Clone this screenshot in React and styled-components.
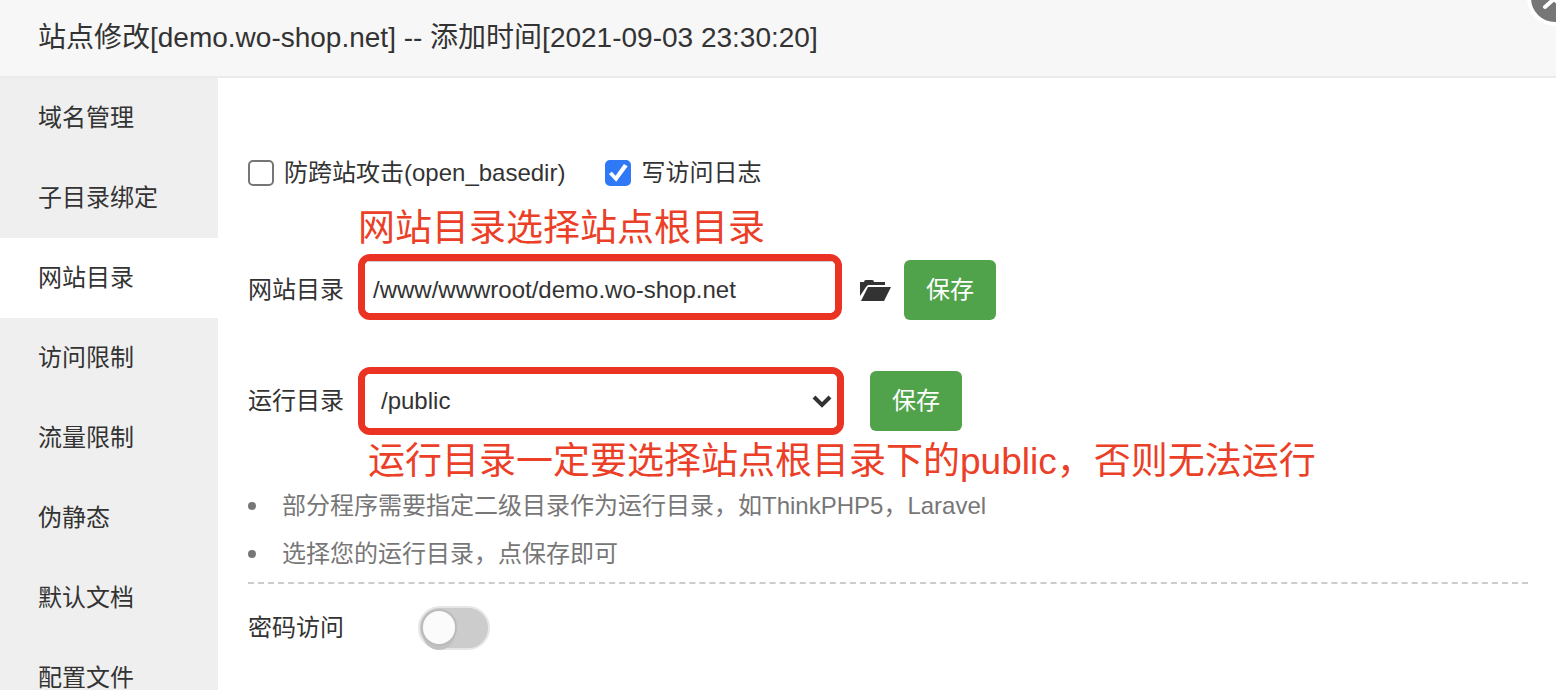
import React, { useState } from 'react'
import styled, { createGlobalStyle } from 'styled-components'

const GlobalStyle = createGlobalStyle`
  * {
    box-sizing: border-box;
  }

  body {
    margin: 0;
    background: #fff;
    color: #333;
    font-family: 'Liberation Sans', 'Noto Sans CJK SC', sans-serif;
    font-size: 24px;
    line-height: 40px;
    overflow: hidden;
  }

  button,
  input,
  select {
    font-family: inherit;
    font-size: inherit;
    line-height: inherit;
    color: inherit;
  }
`

const Dialog = styled.div`
  position: relative;
  display: flex;
  flex-direction: column;
  height: 100vh;
  overflow: hidden;
`

const Header = styled.header`
  flex: none;
  padding: 0 38px;
  background: #f7f7f7;
  border-bottom: 2px solid #ebebeb;
`

const Title = styled.h1`
  margin: 0;
  font-size: 28px;
  font-weight: normal;
  line-height: 76px;
`

const CloseButton = styled.button`
  position: absolute;
  top: -32px;
  right: -29px;
  width: 60px;
  height: 60px;
  padding: 0;
  border: 0;
  background: none;

  svg {
    display: block;
  }
`

const Body = styled.div`
  flex: 1;
  display: flex;
  min-height: 0;
`

const Sidebar = styled.nav`
  flex: none;
  width: 218px;
  overflow: hidden;
  background: #efefef;
`

const MenuItem = styled.a`
  display: block;
  padding-left: 38px;
  line-height: 80px;
  color: inherit;
  text-decoration: none;
  background: ${({ $active }) => ($active ? '#fff' : 'transparent')};
`

const Content = styled.main`
  flex: 1;
  min-width: 0;
  padding: 75px 28px 0 30px;
`

const CheckRow = styled.div`
  display: flex;
  align-items: center;
  gap: 40px;
`

const CheckLabel = styled.label`
  display: flex;
  align-items: center;
  gap: 10px;
`

const Checkbox = styled.input`
  appearance: none;
  display: flex;
  width: 26px;
  height: 26px;
  margin: 0;
  border: 2px solid #767676;
  border-radius: 5px;
  background: #fff;

  &:checked {
    border-color: #2f78f6;
    background: #2f78f6;
  }

  &:checked::before {
    content: '';
    width: 22px;
    height: 22px;
    background: #fff;
    clip-path: polygon(7% 54%, 20% 44%, 37% 62%, 75% 9%, 92% 19%, 40% 90%);
  }
`

const Note = styled.p`
  margin: ${({ $margin }) => $margin};
  color: #eb3f28;
  font-size: 37px;
  line-height: 54px;
  white-space: nowrap;
`

const FieldRow = styled.div`
  display: flex;
  align-items: ${({ $align }) => $align || 'center'};
`

const FieldLabel = styled.label`
  flex: none;
  width: 110px;
  line-height: 60px;
`

const Highlight = styled.div`
  position: relative;
  width: ${({ $width }) => $width};
  height: ${({ $height }) => $height};
  border: 7px solid #ea3323;
  border-radius: 12px;
  overflow: hidden;
`

const PathInput = styled.input`
  display: block;
  width: 100%;
  height: 100%;
  padding: 4px 8px 0;
  border: 0;
  border-top: 1px solid #ccc;
  outline: none;
`

const DirSelect = styled.select`
  display: block;
  width: 100%;
  height: 100%;
  padding: 0 16px;
  border: 0;
  outline: none;
  appearance: none;
  background: #fff;
`

const Arrow = styled.svg`
  position: absolute;
  right: 5px;
  top: 21px;
  pointer-events: none;
`

const FolderButton = styled.button`
  display: flex;
  align-items: center;
  height: 58px;
  margin: 0 12px 0 18px;
  padding: 0;
  border: 0;
  background: none;
`

const SaveButton = styled.button`
  width: 92px;
  height: 60px;
  padding: 0;
  border: 0;
  border-radius: 6px;
  background: #51a34b;
  color: #fff;
  line-height: 60px;
`

const RunRow = styled(FieldRow)`
  margin-top: 47px;

  ${SaveButton} {
    margin-left: 26px;
  }
`

const Tips = styled.ul`
  margin: 0;
  padding: 0 0 4px;
  border-bottom: 2px dashed #ccc;
  color: #777;
  line-height: 48px;
  list-style: none;
`

const Tip = styled.li`
  display: flex;
  align-items: center;
  gap: 26px;

  &::before {
    content: '';
    width: 8px;
    height: 8px;
    border-radius: 50%;
    background: #777;
  }
`

const SwitchRow = styled.div`
  display: flex;
  align-items: center;
  height: 88px;
`

const SwitchLabel = styled.label`
  width: 170px;
`

const Switch = styled.input`
  appearance: none;
  display: flex;
  width: 72px;
  height: 44px;
  margin: 0;
  padding: 3px;
  border: 2px solid #e6e6e6;
  border-radius: 22px;
  background: ${({ checked }) => (checked ? '#51a34b' : '#ccc')};

  &::before {
    content: '';
    width: 32px;
    height: 33px;
    margin-left: ${({ checked }) => (checked ? '30px' : '0')};
    border-radius: 16px;
    background: #fbfbfb;
    box-shadow: 0 0 1px 2px #bbb, 0 6px 0 #c2c2c2;
  }
`

const menu = ['域名管理', '子目录绑定', '网站目录', '访问限制', '流量限制', '伪静态', '默认文档', '配置文件']

const App = () => {
  const [active, setActive] = useState('网站目录')
  const [basedir, setBasedir] = useState(false)
  const [log, setLog] = useState(true)
  const [path, setPath] = useState('/www/wwwroot/demo.wo-shop.net')
  const [locked, setLocked] = useState(false)

  return (
    <Dialog>
      <GlobalStyle />
      <Header>
        <Title>站点修改[demo.wo-shop.net] -- 添加时间[2021-09-03 23:30:20]</Title>
      </Header>
      <CloseButton type="button" aria-label="关闭">
        <svg width="60" height="60" viewBox="0 0 60 60">
          <circle cx="30" cy="30" r="28" fill="#fff" />
          <circle cx="30" cy="30" r="24" fill="#767676" />
          <path d="M20 39 29 31 38 39M20 21 29 31 38 21" fill="none" stroke="#fff" strokeWidth="4" strokeLinecap="round" />
        </svg>
      </CloseButton>
      <Body>
        <Sidebar>
          {menu.map(item => (
            <MenuItem key={item} href="#" $active={item === active} onClick={() => setActive(item)}>
              {item}
            </MenuItem>
          ))}
        </Sidebar>
        <Content>
          <CheckRow>
            <CheckLabel>
              <Checkbox type="checkbox" checked={basedir} onChange={e => setBasedir(e.target.checked)} />
              防跨站攻击(open_basedir)
            </CheckLabel>
            <CheckLabel>
              <Checkbox type="checkbox" checked={log} onChange={e => setLog(e.target.checked)} />
              写访问日志
            </CheckLabel>
          </CheckRow>
          <Note $margin="9px 0 -2px 110px">网站目录选择站点根目录</Note>
          <FieldRow $align="flex-end">
            <FieldLabel htmlFor="path">网站目录</FieldLabel>
            <Highlight $width="484px" $height="66px">
              <PathInput id="path" value={path} onChange={e => setPath(e.target.value)} />
            </Highlight>
            <FolderButton type="button" aria-label="选择目录">
              <svg width="32" height="24" viewBox="0 0 32 24" fill="#333">
                <path d="M0 17V3h4q0-2 2-2h6q2 0 2 2h11v3H8L6 8z" />
                <path d="M8 8h23l-7 14H1z" />
              </svg>
            </FolderButton>
            <SaveButton type="button">保存</SaveButton>
          </FieldRow>
          <RunRow>
            <FieldLabel htmlFor="run">运行目录</FieldLabel>
            <Highlight $width="486px" $height="68px">
              <DirSelect id="run" defaultValue="/public">
                <option>/public</option>
              </DirSelect>
              <Arrow width="20" height="14" viewBox="0 0 20 14">
                <path d="M2 2l8 8 8-8" fill="none" stroke="#333" strokeWidth="4" />
              </Arrow>
            </Highlight>
            <SaveButton type="button">保存</SaveButton>
          </RunRow>
          <Note $margin="0 0 -7px 120px">运行目录一定要选择站点根目录下的public，否则无法运行</Note>
          <Tips>
            <Tip>部分程序需要指定二级目录作为运行目录，如ThinkPHP5，Laravel</Tip>
            <Tip>选择您的运行目录，点保存即可</Tip>
          </Tips>
          <SwitchRow>
            <SwitchLabel htmlFor="lock">密码访问</SwitchLabel>
            <Switch id="lock" type="checkbox" role="switch" checked={locked} onChange={e => setLocked(e.target.checked)} />
          </SwitchRow>
        </Content>
      </Body>
    </Dialog>
  )
}

export default App
